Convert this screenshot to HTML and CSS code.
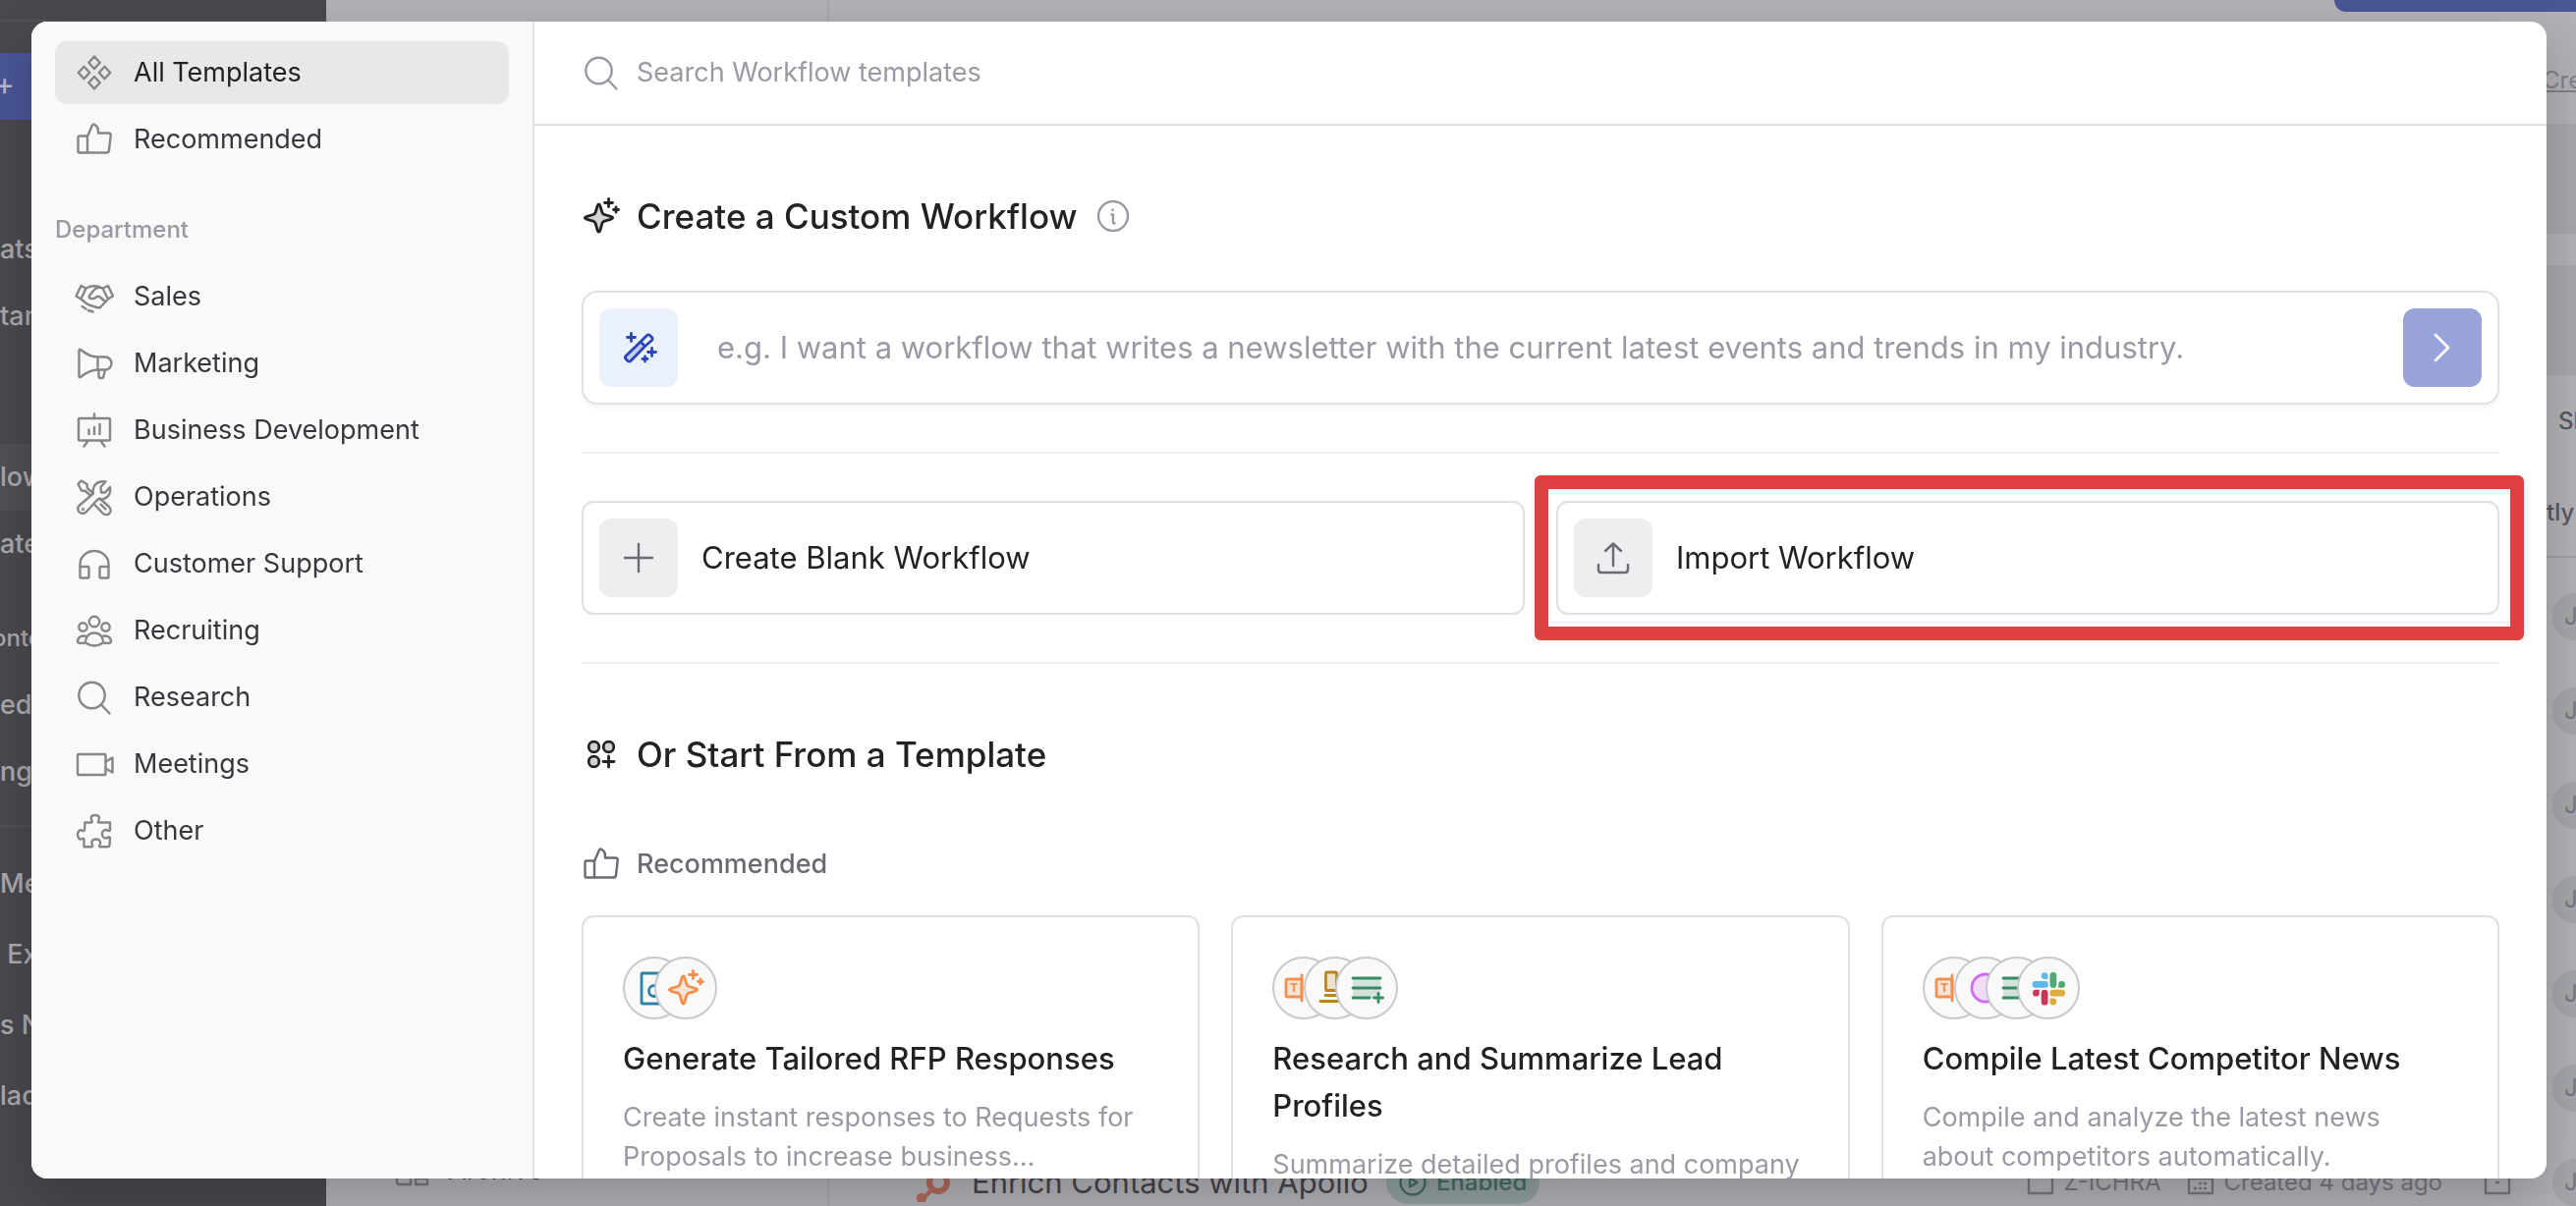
FILE: index.html
```html
<!DOCTYPE html>
<html lang="en">
<head>
<meta charset="utf-8">
<title>Workflow Templates</title>
<link rel="stylesheet" href="styles.css">
</head>

<body>

<!-- shared icons -->
<svg class="sprite" aria-hidden="true">
	<symbol id="i-thumb" viewBox="0 0 40 40">
		<path d="M13 16.500H5q-1.500 0-1.500 1.500v14q0 1.500 1.500 1.500h8zM13 33.500V17l4.500-10.500c1-2.300 2-2.200 3-1.500 2.500 1.500 3.500 3.500 3.500 6v2.500h10.500q2.500 0 2.200 2.500l-1.700 15q-.3 2.500-2.500 2.500z"/>
	</symbol>
	<symbol id="i-search" viewBox="0 0 40 40">
		<circle cx="17.500" cy="18" r="13.200"/><path d="M27 27.500l8.500 9"/>
	</symbol>
	<symbol id="i-sparkle" viewBox="0 0 40 40">
		<path class="tint" d="M17.500 8c.8 0 1.200 1 1.500 2l1.800 6c.5 1.500 1 2 2.500 2.500l6.200 1.800c3 1 3 2 0 3l-6.200 1.800c-1.500.5-2 1-2.500 2.500l-1.800 6.400c-.3 1-.7 2.200-1.500 2.200s-1.200-1.200-1.500-2.200l-1.800-6.400c-.5-1.500-1-2-2.500-2.500l-6.200-1.800c-3-1-3-2 0-3l6.200-1.800c1.500-.5 2-1 2.500-2.500l1.800-6c.3-1 .7-2 1.500-2z"/>
		<path d="M27.500 2.500v8M23.500 6.500h8M35 11v5M32.500 13.500h5"/>
	</symbol>
	<symbol id="i-list" viewBox="0 0 40 40">
		<path class="tint bare" d="M6 10h28v20H6z"/>
		<path d="M6 10h28M6 20h28M6 30h17M32 25.500v9M27.500 30h9"/>
	</symbol>
	<symbol id="i-field" viewBox="0 0 40 40">
		<path class="tint" d="M18 11H3.500Q2 11 2 12.500v15Q2 29 3.500 29H18z"/>
		<path d="M18 7v26"/>
		<text x="6" y="24" font-size="12">T</text>
	</symbol>
</svg>

<!-- page behind the dialog -->
<div class="app">
	<div class="side">
		<div class="side-top"></div>
		<div class="side-new">+</div>
		<ul class="side-group">
			<li>ats</li>
			<li>tan</li>
		</ul>
		<ul class="side-group flows">
			<li class="current">low</li>
			<li>ate</li>
		</ul>
		<ul class="side-group more">
			<li class="small">onte</li>
			<li>ed</li>
			<li>ngs</li>
		</ul>
		<ul class="side-group recent">
			<li>Me</li>
			<li>&nbsp;Ex</li>
			<li>s N</li>
			<li>lac</li>
		</ul>
	</div>
	<div class="folders">
		<div class="folder">
			<svg class="icon" viewBox="0 0 40 40"><path d="M4 6h32v8H4zM4 18h14v16H6q-2 0-2-2zM23 22h12v12H23zM23 28h12"/></svg>
			<span>Archive</span>
		</div>
	</div>
	<div class="content">
		<div class="cta"></div>
		<a class="cre" href="#">Cre</a>
		<div class="band"></div>
		<div class="band"></div>
		<div class="head-a">Sh</div>
		<div class="head-b">tly</div>
		<div class="flow-row"><span class="avatar">J</span></div>
		<div class="flow-row"><span class="avatar">J</span></div>
		<div class="flow-row"><span class="avatar">J</span></div>
		<div class="flow-row"><span class="avatar">J</span></div>
		<div class="flow-row"><span class="avatar">J</span></div>
		<div class="flow-row"><span class="avatar">J</span></div>
		<div class="flow-row">
			<svg class="icon hub" viewBox="0 0 40 40"><circle cx="27" cy="20" r="9" stroke-width="6"/><path d="M20 28l-9 9M27 11V2" stroke-width="4"/><circle class="dot" cx="10" cy="36" r="4"/></svg>
			<span class="flow-name">Enrich Contacts with Apollo</span>
			<span class="pill">
				<svg class="icon mini" viewBox="0 0 28 28"><circle cx="14" cy="14" r="12.500"/><path d="M11 9.500v9l7.500-4.500z"/></svg>
				Enabled
			</span>
			<span class="meta">
				<svg class="icon mini" viewBox="0 0 28 28"><path d="M2 4h9l3 3h12v18H2z"/></svg>
				Z-ICHRA
			</span>
			<span class="meta">
				<svg class="icon mini" viewBox="0 0 28 28"><path d="M2 4h24v21H2zM2 10h24M8 20h1M13 20h1M18 20h1M13 15h1M18 15h1"/></svg>
				Created 4 days ago
			</span>
			<svg class="icon mini last" viewBox="0 0 28 28"><path d="M2 4h24v21H2zM13 14h2"/></svg>
			<span class="avatar">J</span>
		</div>
	</div>
</div>

<div class="overlay">
<div class="modal" role="dialog" aria-label="Workflow templates">

	<div class="nav">
		<button class="nav-item active" type="button">
			<svg class="icon" viewBox="0 0 40 40"><path d="M20 3.500l5.700 6.200L20 16l-5.700-6.300zM9.500 13.700L15.200 20l-5.700 6.300L3.800 20zM30.500 13.700L36.200 20l-5.700 6.300L24.800 20zM20 24l5.700 6.300L20 36.500l-5.700-6.200z"/></svg>
			All Templates
		</button>
		<button class="nav-item" type="button">
			<svg class="icon"><use href="#i-thumb"/></svg>
			Recommended
		</button>
		<h2 class="nav-title">Department</h2>
		<button class="nav-item" type="button">
			<svg class="icon" viewBox="0 0 40 40"><path d="M6.500 9l5 2.500L6.500 22.500l-5-3zM34 9l5 10.500-5 3-5.500-11zM11.500 11.500q8-4.500 17 0M6.500 22.500c3 2.500 5 4.500 8 6l8 2.500c2 .6 3.500.5 4.500-1l7-7.500M27 11c-3-.5-5.500 0-7 2l-5 6c-.8 1.500 0 2.500 1.500 3 2 .5 4-.3 5.500-1.500 2-1.300 3-1 4.500.5l4.500 4M7.500 30l4 2.500M14 34l4.500 1.500"/></svg>
			Sales
		</button>
		<button class="nav-item" type="button">
			<svg class="icon" viewBox="0 0 40 40"><path d="M4.500 7v26q0 2 1.800.8C11 30 16 26.500 23.500 26.500v-13C16 13.500 11 10 6.300 6.200Q4.500 5 4.500 7zM23.500 13.500H31a6.500 6.500 0 0 1 0 13h-7.500M24.500 26.500V33q0 2 2 2h1.200q1.500 0 1.800-2l1.500-6.500"/></svg>
			Marketing
		</button>
		<button class="nav-item" type="button">
			<svg class="icon" viewBox="0 0 40 40"><rect x="4" y="8" width="32" height="22.500" rx="1"/><path d="M20 3.500V8M14.500 19.500v4.500M20 17v7M25.500 14v10M13.500 31l-4 5.500M26.500 31l4 5.500"/></svg>
			Business Development
		</button>
		<button class="nav-item" type="button">
			<svg class="icon" viewBox="0 0 40 40"><path d="M5 28.500L19 16.500C17.500 9 22.500 3 31.500 4.500L26.500 10l.5 5.500h4L36 10c1.500 8-4 13.500-12.500 12.500L11.500 35.500C6.500 39.500 0 33 5 28.500zM3.500 7L6.500 3.500 12.500 7l.5 4 6 5.500M3.500 7L7 13.500l4 .5 5.500 5M24 22.500l1.500-1L35 30c5 5-2 11-6.500 6.500L19.500 27l1.500-2M26.500 27.500l5 5"/><circle cx="8.500" cy="32.500" r=".6"/></svg>
			Operations
		</button>
		<button class="nav-item" type="button">
			<svg class="icon" viewBox="0 0 40 40"><path d="M5.500 23V20.500a14.500 13.500 0 0 1 29 0V23"/><rect x="5.500" y="23" width="9" height="11.500" rx="1"/><rect x="25.500" y="23" width="9" height="11.500" rx="1"/></svg>
			Customer Support
		</button>
		<button class="nav-item" type="button">
			<svg class="icon" viewBox="0 0 40 40"><circle cx="20" cy="11" r="5.200"/><circle cx="8.500" cy="16.500" r="4.200"/><circle cx="31.500" cy="16.500" r="4.200"/><path d="M11 32.500c0-6 3.500-10 9-10s9 4 9 10q-9 6-18 0zM12.500 26c-5-1.500-9.500.5-9.500 5.500 0 1.500 4 1.800 7.500 1M27.500 26c5-1.500 9.500.5 9.500 5.500 0 1.500-4 1.800-7.500 1"/></svg>
			Recruiting
		</button>
		<button class="nav-item" type="button">
			<svg class="icon"><use href="#i-search"/></svg>
			Research
		</button>
		<button class="nav-item" type="button">
			<svg class="icon" viewBox="0 0 40 40"><rect x="3" y="10" width="28.500" height="21" rx="1"/><path d="M31.500 17.500l7-4v15l-7-4"/></svg>
			Meetings
		</button>
		<button class="nav-item" type="button">
			<svg class="icon" viewBox="0 0 40 40"><path d="M10.500 11.500H17c1 0 1-1 .5-1.800C15.500 6.500 17 4 20.800 4s5.400 2.500 3.500 5.700c-.6.800-.4 1.800.5 1.800H36v7.800c0 1-1 1-1.800.5-3.400-1.800-6.200-.2-6.200 3.400s2.800 5.200 6.200 3.400c.8-.5 1.800-.4 1.800.5l-.5 7.400c-.1 1.200-.8 1.800-2 1.800H26c-1 0-1-.8-.5-1.600 1.800-3.400.2-6.200-3.800-6.200s-5.400 2.800-3.700 6.200c.5.800.4 1.600-.5 1.600h-8V28.500c0-1-1-1-1.800-.5C4.800 29.500 3 27 3 23.800s2-5.500 4.700-4c.8.500 2.300.4 2.300-.8z"/></svg>
			Other
		</button>
	</div>

	<div class="main">
		<label class="search">
			<svg class="icon"><use href="#i-search"/></svg>
			<input type="text" placeholder="Search Workflow templates" aria-label="Search Workflow templates">
		</label>

		<div class="body">
			<h1 class="title">
				<svg class="icon bold"><use href="#i-sparkle"/></svg>
				Create a Custom Workflow
				<svg class="icon info" viewBox="0 0 32 32"><circle cx="16" cy="16" r="15"/><path d="M14.500 14.500H16V22q0 1.500 1.500 1.500M15.500 9.500v.5"/></svg>
			</h1>

			<form class="prompt">
				<span class="tile blue">
					<svg class="icon bold" viewBox="0 0 40 40"><path class="tint" d="M22 14l4.500 4.500L12 33.500q-1.500 1.300-3 0l-2-2q-1.300-1.500 0-3z"/><path d="M22 14l6.500-6.500q1.500-1.300 3 0l2 2q1.300 1.500 0 3L26.500 18.500M12.500 5.500v8M8.500 9.500h8M33.500 20.500v8M29.500 24.500h8M26.500 29v5M24 31.500h5"/></svg>
				</span>
				<input type="text" placeholder="e.g. I want a workflow that writes a newsletter with the current latest events and trends in my industry." aria-label="Describe your workflow">
				<button class="send" type="button" aria-label="Create">
					<svg class="icon bold" viewBox="0 0 40 40"><path d="M13 7l13 13-13 13"/></svg>
				</button>
			</form>

			<div class="choices">
				<button class="choice" type="button">
					<span class="tile"><svg class="icon" viewBox="0 0 40 40"><path d="M20 6v28M6 20h28"/></svg></span>
					Create Blank Workflow
				</button>
				<div class="marked">
					<button class="choice" type="button">
						<span class="tile"><svg class="icon" viewBox="0 0 40 40"><path d="M20 28V5.500M12 13l8-7.500 8 7.500M5 27v5q0 3 3 3h24q3 0 3-3v-5"/></svg></span>
						Import Workflow
					</button>
				</div>
			</div>

			<h1 class="title">
				<svg class="icon bold" viewBox="0 0 40 40"><circle class="tint" cx="12.500" cy="12.500" r="5.300"/><circle class="tint" cx="27.500" cy="12.500" r="5.300"/><circle class="tint" cx="12.500" cy="27.500" r="5.300"/><path d="M27.500 22v11M22 27.500h11"/></svg>
				Or Start From a Template
			</h1>

			<h2 class="subtitle">
				<svg class="icon"><use href="#i-thumb"/></svg>
				Recommended
			</h2>

			<div class="cards">
				<div class="card">
					<div class="chips">
						<span class="chip teal"><svg class="icon bold" viewBox="0 0 40 40"><rect x="7" y="5" width="26" height="31" rx="1"/><circle cx="20" cy="23" r="5.500"/></svg></span>
						<span class="chip orange"><svg class="icon bold"><use href="#i-sparkle"/></svg></span>
					</div>
					<h3>Generate Tailored RFP Responses</h3>
					<p>Create instant responses to Requests for Proposals to increase business…</p>
				</div>
				<div class="card">
					<div class="chips">
						<span class="chip orange"><svg class="icon bold"><use href="#i-field"/></svg></span>
						<span class="chip gold"><svg class="icon bold" viewBox="0 0 40 40"><rect class="tint" x="10.500" y="4" width="11" height="18.500" rx="1"/><path d="M10 27.500h20M5 33.500h30"/></svg></span>
						<span class="chip green"><svg class="icon bold"><use href="#i-list"/></svg></span>
					</div>
					<h3>Research and Summarize Lead Profiles</h3>
					<p>Summarize detailed profiles and company</p>
				</div>
				<div class="card">
					<div class="chips">
						<span class="chip orange"><svg class="icon bold"><use href="#i-field"/></svg></span>
						<span class="chip purple"><svg class="icon bold" viewBox="0 0 40 40"><circle class="tint" cx="20" cy="20" r="14"/></svg></span>
						<span class="chip green"><svg class="icon bold"><use href="#i-list"/></svg></span>
						<span class="chip">
							<svg class="slack" viewBox="0 0 40 40">
								<path fill="#5fb9e8" d="M7 13h9.500a3.400 3.400 0 0 1 0 6.800H7A3.400 3.400 0 0 1 7 13zM19.500 11H16a3.400 3.400 0 1 1 3.500-3.400z"/>
								<path fill="#4fa972" d="M21.500 7.500a3.400 3.400 0 0 1 6.800 0v9a3.400 3.400 0 0 1-6.800 0zM30.200 19.800v-3.400a3.400 3.400 0 1 1 3.400 3.400z"/>
								<path fill="#cb3558" d="M12.700 25.200a3.400 3.400 0 0 1 6.800 0v9a3.400 3.400 0 0 1-6.800 0zM10.800 21.800v3.400a3.400 3.400 0 1 1-3.400-3.400z"/>
								<path fill="#deac3c" d="M25 21.800h8.700a3.400 3.400 0 0 1 0 6.800H25a3.400 3.400 0 0 1 0-6.800zM21.500 30.600h3.400a3.400 3.400 0 1 1-3.400 3.400z"/>
							</svg>
						</span>
					</div>
					<h3>Compile Latest Competitor News</h3>
					<p>Compile and analyze the latest news about competitors automatically.</p>
				</div>
			</div>
		</div>
	</div>

</div>
</div>

</body>
</html>
```

FILE: styles.css
```css
*{box-sizing: border-box;}
body{
	margin: 0;
	overflow: hidden;
	color: #222;
	font-family: Inter, "Liberation Sans", sans-serif;
	font-size: 27px;
	line-height: 40px;
}
h1, h2, h3, p, ul{
	margin: 0;
	padding: 0;
	font-weight: 500;
}
p{font-weight: 400;}
li{list-style: none;}
button, input{
	padding: 0;
	border: 0;
	background: none;
	color: inherit;
	font: inherit;
}
input{outline: none;}
input::placeholder{color: #9a99a3; opacity: 1;}

/* icons */
.sprite{
	position: absolute;
	width: 0;
	height: 0;
}
.icon{
	flex: none;
	width: 40px;
	height: 40px;
	fill: none;
	stroke: currentColor;
	stroke-width: 2.4;
	stroke-linecap: round;
	stroke-linejoin: round;
}
.icon.bold{stroke-width: 2.8;}
.icon.mini{
	width: 28px;
	height: 28px;
}
.icon.info{
	width: 32px;
	height: 32px;
	margin-left: 4px;
	color: #9a99a3;
}
.tint{
	fill: currentColor;
	fill-opacity: .2;
}
.bare{stroke: none;}
.icon text, symbol text{
	fill: currentColor;
	stroke: none;
	font-weight: 800;
}

/* page behind */
.app{
	display: flex;
	height: 100vh;
	overflow: hidden;
	background: #b1b0b5;
}
.side{
	flex: none;
	width: 332px;
	background: #49484d;
	color: #a9a8ad;
	overflow: hidden;
}
.side-top{
	height: 22px;
	border-bottom: 2px solid #525156;
}
.side-new{
	height: 68px;
	margin: 32px 16px 0 0;
	background: #495595;
	color: #b5b8cc;
	font-size: 32px;
	line-height: 64px;
	text-indent: -6px;
}
.side-group{margin-top: 96px;}
.side-new + .side-group{margin-top: 98px;}
.side-group li{
	height: 68px;
	line-height: 68px;
}
.side-group .current{background: #504f54;}
.side-group .small{
	font-size: 24px;
	text-indent: -8px;
}
.side-group.more{margin-top: 28px;}
.side-group.recent{
	margin-top: 20px;
	padding-top: 22px;
	border-top: 2px solid #525156;
}
.recent li{
	height: 72px;
	line-height: 72px;
}
.folders{
	display: flex;
	flex: none;
	flex-direction: column;
	justify-content: flex-end;
	width: 512px;
	padding: 0 68px 16px;
	border-right: 2px solid #a6a5ab;
}
.folder{
	display: flex;
	gap: 16px;
	color: #45444a;
}
.folder .icon{color: #77767c;}
.content{
	flex: 1;
	min-width: 0;
	color: #77767f;
}
.cta{
	width: 246px;
	height: 12px;
	margin-left: auto;
	border-radius: 0 0 0 12px;
	background: #495595;
}
.cre{
	display: block;
	width: 34px;
	height: 114px;
	margin-left: auto;
	color: #807f88;
	font-size: 24px;
	line-height: 140px;
}
.band{
	height: 112px;
	margin-bottom: 32px;
	background: #a7a6ab;
}
.head-a, .head-b{
	width: 30px;
	margin-left: auto;
	overflow: hidden;
	color: #57565d;
	font-size: 24px;
	font-weight: 500;
}
.head-a{
	height: 94px;
	padding: 0 0 0 12px;
	line-height: 30px;
}
.head-b{
	height: 60px;
	margin-bottom: 12px;
	line-height: 28px;
	border-bottom: 2px solid #9f9ea6;
}
.flow-row{
	display: flex;
	align-items: center;
	height: 96px;
	margin-right: -24px;
	padding-left: 84px;
	font-size: 24px;
}
.hub{color: #b0685a;}
.hub .dot{fill: currentColor;}
.flow-name{
	margin: 0 18px 0 21px;
	color: #45444a;
	font-size: 31px;
}
.pill{
	display: flex;
	align-items: center;
	gap: 10px;
	height: 44px;
	margin-right: auto;
	padding: 0 13px;
	border-radius: 22px;
	background: #919f9f;
	color: #456a60;
	font-weight: 500;
}
.meta{
	display: flex;
	align-items: center;
	gap: 10px;
	margin-right: 26px;
}
.icon.last{margin: 0 42px 0 16px;}
.avatar{
	width: 48px;
	height: 48px;
	margin-left: auto;
	padding-left: 12px;
	border-radius: 50%;
	background: #a5a4aa;
	line-height: 48px;
}
.last + .avatar{margin-left: 0;}

/* dialog */
.overlay{
	position: fixed;
	inset: 0;
	display: flex;
	padding: 22px 30px 28px 32px;
}
.modal{
	display: flex;
	flex: 1;
	min-width: 0;
	overflow: hidden;
	border-radius: 16px;
	background: #fff;
	box-shadow: 0 20px 50px rgba(0,0,0,.2);
}
.nav{
	flex: none;
	width: 512px;
	padding: 20px 24px;
	border-right: 2px solid #e3e2e8;
	background: #f9f9f9;
}
.nav-item{
	display: flex;
	align-items: center;
	gap: 20px;
	width: 100%;
	height: 64px;
	margin-bottom: 4px;
	padding-left: 20px;
	border-radius: 12px;
	color: #38373e;
}
.nav-item .icon{color: #868686;}
.nav-item.active{
	background: #e8e8e8;
	color: #222;
}
.nav-title{
	margin: 40px 0 16px;
	color: #9a99a3;
	font-size: 24px;
}
.main{
	display: flex;
	flex: 1;
	flex-direction: column;
	min-width: 0;
}
.search{
	display: flex;
	flex: none;
	align-items: center;
	gap: 16px;
	height: 106px;
	padding: 0 48px;
	border-bottom: 2px solid #e0e0e0;
	color: #9a99a3;
}
.search input{flex: 1;}
.body{
	flex: 1;
	min-height: 0;
	padding: 68px 48px 0;
	overflow: hidden;
}
.title{
	display: flex;
	align-items: center;
	gap: 16px;
	height: 48px;
	font-size: 35px;
}
.prompt, .choice, .card{
	border: 2px solid #e0e0e0;
	border-radius: 16px;
}
.prompt, .choice{
	display: flex;
	align-items: center;
	height: 116px;
	padding: 0 16px;
	font-size: 31px;
}
.prompt{
	margin-top: 52px;
	box-shadow: 0 2px 6px rgba(0,0,0,.06);
}
.prompt input{
	flex: 1;
	margin: 0 40px;
}
.tile, .send{
	display: flex;
	flex: none;
	align-items: center;
	justify-content: center;
	width: 80px;
	height: 80px;
	border-radius: 12px;
	background: #eeeef0;
	color: #6b6a73;
}
.tile.blue{
	background: #eaf1fd;
	color: #2a46b8;
}
.send{
	background: #97a3d9;
	color: #fff;
}
.choices{
	display: grid;
	grid-template-columns: 1fr 1fr;
	gap: 32px;
	margin: 48px 0 68px;
	padding: 48px 0;
	border: solid #f2f2f2;
	border-width: 2px 0;
}
.choice{
	gap: 24px;
	width: 100%;
	border-radius: 12px;
}
/* red frame round the import button */
.marked{position: relative;}
.marked::after{
	content: "";
	position: absolute;
	inset: -26px -25px -26px -22px;
	border: 14px solid #e04040;
	border-radius: 6px;
	box-shadow: 0 2px 6px rgba(0,0,0,.08), inset 0 2px 6px rgba(0,0,0,.08);
	pointer-events: none;
}
.subtitle{
	display: flex;
	align-items: center;
	gap: 16px;
	margin: 68px 0 32px;
	color: #6b6a73;
	font-size: 27px;
}
.cards{
	display: grid;
	grid-template-columns: repeat(3, 1fr);
	gap: 32px;
}
.card{
	height: 400px;
	padding: 40px;
	border-radius: 12px;
}
.card h3{
	margin: 16px 0;
	font-size: 31px;
	line-height: 48px;
}
.card p{color: #9a99a3;}
.chips{display: flex;}
.chip{
	display: flex;
	align-items: center;
	justify-content: center;
	width: 64px;
	height: 64px;
	border: 2px solid #c9c8cd;
	border-radius: 50%;
	background: #f9f9f9;
}
.chip + .chip{margin-left: -32px;}
.teal{color: #2f81a8;}
.orange{color: #f0914f;}
.gold{color: #bb8421;}
.green{color: #3a8a63;}
.purple{color: #cf6bf0;}
.slack{
	width: 40px;
	height: 40px;
}
```
